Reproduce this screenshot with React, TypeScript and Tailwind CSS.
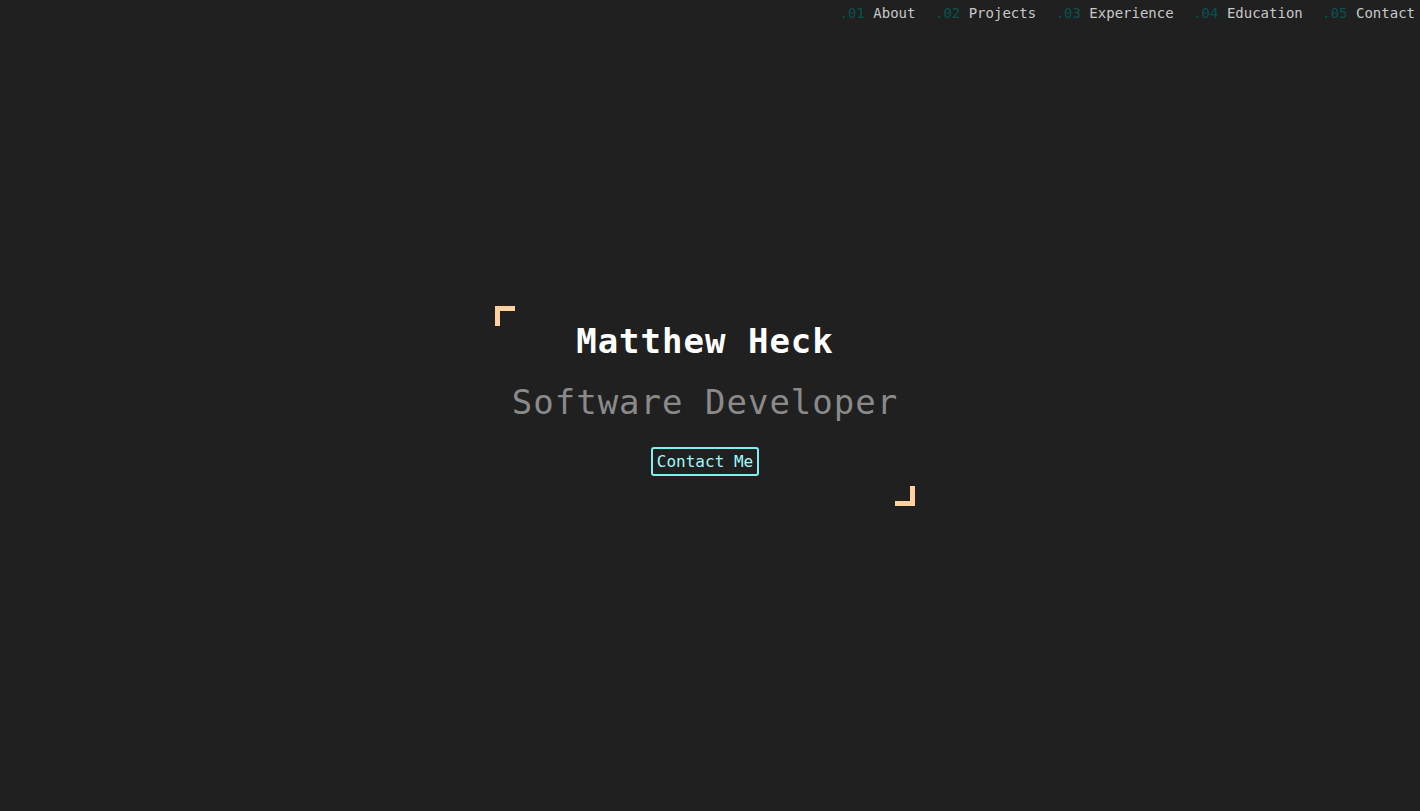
const NAV_ITEMS = [
  { num: ".01", label: "About" },
  { num: ".02", label: "Projects" },
  { num: ".03", label: "Experience" },
  { num: ".04", label: "Education" },
  { num: ".05", label: "Contact" },
];

const mono = "font-['DejaVu_Sans_Mono',monospace]";

function Nav() {
  return (
    <nav className={`flex justify-end gap-[19.5px] pr-[5px] pt-[3px] text-[14px] leading-[21px] ${mono}`}>
      {NAV_ITEMS.map((item) => (
        <a key={item.num} href="#" className="whitespace-pre text-[#c8c8c8]">
          <span className="text-[#075252]">{item.num}</span> {item.label}
        </a>
      ))}
    </nav>
  );
}

function Hero() {
  return (
    <div className="relative flex w-[420px] flex-col items-center pt-[15px] pb-[30px]">
      <span className="absolute left-0 top-0 h-[20px] w-[20px] border-l-[5px] border-t-[5px] border-[#ffd1a1]" />
      <span className="absolute bottom-0 right-0 h-[20px] w-[20px] border-b-[5px] border-r-[5px] border-[#ffd1a1]" />
      <h1 className={`text-[34px] font-bold leading-[40px] tracking-[1px] text-white ${mono}`}>Matthew Heck</h1>
      <h2 className={`mt-[21px] text-[34px] leading-[40px] tracking-[1px] text-[#8a8a8a] ${mono}`}>
        Software Developer
      </h2>
      <button
        className={`mt-[25px] rounded-[3px] border-2 border-[#86eeee] px-[3.5px] py-[3px] text-[16px] leading-[19px] text-[#9ffafa] ${mono}`}
      >
        Contact Me
      </button>
    </div>
  );
}

export default function App() {
  return (
    <div className="relative h-[811px] w-full overflow-hidden bg-[#202020]">
      <div className="absolute inset-x-0 top-0">
        <Nav />
      </div>
      <main className="flex h-full items-center justify-center pr-[10px]">
        <Hero />
      </main>
    </div>
  );
}
